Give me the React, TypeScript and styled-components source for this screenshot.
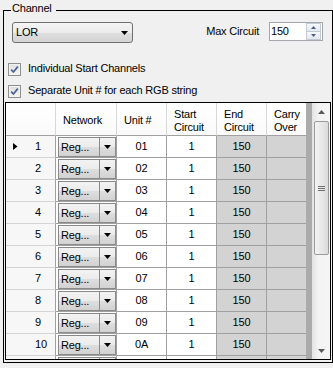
import React from 'react';
import styled, { createGlobalStyle } from 'styled-components';

const GlobalStyle = createGlobalStyle`
  * { box-sizing: border-box; }
  html, body { margin: 0; padding: 0; background: #f0f0f0; }
  body {
    width: 333px; height: 368px; overflow: hidden;
    font-family: "Liberation Sans", Arial, sans-serif;
    font-size: 11px; letter-spacing: -0.2px; color: #000;
  }
`;

const Frame = styled.fieldset`
  margin: 1px 0 0 3px;
  padding: 0 1px 2px;
  width: 330px;
  height: 362px;
  border: 1px solid #000;
  min-width: 0;
`;

const Legend = styled.legend`
  margin-left: 6px;
  padding: 0 4px 4px 1px;
  line-height: 14px;
`;

const TopRow = styled.div`
  margin-top: 3px;
  height: 21px;
  padding: 0 8px 0 7px;
  display: flex;
  align-items: flex-start;
`;

const Select = styled.div`
  width: 121px;
  height: 21px;
  border: 1px solid #707070;
  border-radius: 3px;
  background: linear-gradient(#f4f4f4 0%, #ececec 50%, #dfdfdf 50%, #d4d4d4 100%);
  display: flex;
  align-items: center;
  justify-content: space-between;
  padding: 0 4px 0 3px;
  line-height: 13px;
`;

const MaxLabel = styled.span`
  margin: 3px 10px 0 auto;
  line-height: 13px;
`;

const NumBox = styled.div`
  width: 54px;
  height: 19px;
  border: 1px solid #a5a7ad;
  background: #fff;
  display: flex;
  align-items: stretch;
`;

const NumValue = styled.span`
  flex: 1;
  padding: 2px 0 0 1px;
  line-height: 13px;
`;

const Spin = styled.div`
  width: 15px;
  margin: 0 1px 0 0;
  display: flex;
  flex-direction: column;
`;

const SpinBtn = styled.div`
  flex: 1;
  display: flex;
  align-items: center;
  justify-content: center;
  border: 1px solid #c5cbd4;
  background: linear-gradient(#f7f9fb, #e4e9ef);
  & + & { border-top: none; }
`;

const CheckRow = styled.div<{ $gap: number }>`
  margin-top: ${p => p.$gap}px;
  height: 13px;
  padding-left: 3px;
  display: flex;
  align-items: flex-start;
  gap: 7px;
  line-height: 13px;
`;

const CheckBox = styled.span`
  width: 13px;
  height: 13px;
  border: 1px solid #8e8f8f;
  background: linear-gradient(#dedede, #f6f6f6);
  box-shadow: inset 0 0 0 1px #f3f3f3;
  display: flex;
  align-items: center;
  justify-content: center;
  flex-shrink: 0;
`;

const CheckText = styled.span`
  margin-top: -1px;
`;

const Grid = styled.div`
  margin-top: 4px;
  height: 258px;
  border: 1px solid #000;
  background: #ababab;
  display: flex;
`;

const Table = styled.div`
  width: 306px;
  overflow: hidden;
  display: flex;
  flex-direction: column;
`;

const Row = styled.div<{ $h: number }>`
  display: grid;
  grid-template-columns: 50px 61px 50px 50px 50px 40px;
  width: 301px;
  height: ${p => p.$h}px;
  flex-shrink: 0;
`;

const HeadCell = styled.div`
  border-right: 1px solid #d8d8d8;
  border-bottom: 1px solid #a0a0a0;
  background: linear-gradient(#ffffff, #fafafa);
  padding: 3px 0 0 7px;
  display: flex;
  align-items: center;
  line-height: 13px;
`;

const RowHead = styled.div`
  border-right: 1px solid #a0a0a0;
  border-bottom: 1px solid #d4d4d4;
  background: #f7f7f7;
  padding-left: 7px;
  display: flex;
  align-items: center;
  line-height: 13px;
`;

const Marker = styled.span`
  width: 22px;
  display: flex;
  align-items: center;
`;

const Cell = styled.div<{ $shade?: boolean }>`
  border-right: 1px solid #a0a0a0;
  border-bottom: 1px solid #a0a0a0;
  background: ${p => (p.$shade ? '#d3d3d3' : '#ffffff')};
  display: flex;
  align-items: center;
  justify-content: center;
  line-height: 13px;
`;

const ComboCell = styled.div`
  border-right: 1px solid #a0a0a0;
  border-bottom: 1px solid #a0a0a0;
  background: #fff;
  padding: 1px 0 0 2px;
`;

const Combo = styled.div`
  height: 20px;
  display: flex;
`;

const ComboBody = styled.div`
  flex: 1;
  border: 1px solid #8a8a8a;
  background: linear-gradient(#f3f3f3 0%, #ebebeb 50%, #dedede 50%, #d2d2d2 100%);
  padding-left: 2px;
  display: flex;
  align-items: center;
  line-height: 13px;
`;

const ComboBtn = styled.div`
  width: 16px;
  border: 1px solid #8a8a8a;
  border-left: none;
  background: linear-gradient(#f3f3f3 0%, #ebebeb 50%, #dedede 50%, #d2d2d2 100%);
  display: flex;
  align-items: center;
  justify-content: center;
`;

const Strip = styled.div`
  width: 6px;
`;

const ScrollBar = styled.div`
  width: 18px;
  display: flex;
  flex-direction: column;
  background: linear-gradient(to right, #e3e3e3, #f3f3f3 35%, #f5f5f5);
`;

const ScrollBtn = styled.div`
  height: 17px;
  display: flex;
  align-items: center;
  justify-content: center;
  flex-shrink: 0;
`;

const Track = styled.div`
  flex: 1;
  padding: 1px 1px 0 2px;
`;

const Thumb = styled.div`
  height: 134px;
  border: 1px solid #9a9a9a;
  border-radius: 2px;
  background: linear-gradient(to right, #f3f3f3, #e6e6e6 60%, #dadada);
  display: flex;
  align-items: center;
  justify-content: center;
`;

const DownArrow = ({ color = '#000' }: { color?: string }) => (
  <svg width="7" height="4" viewBox="0 0 7 4"><polygon points="0,0 7,0 3.5,4" fill={color} /></svg>
);
const UpArrow = ({ color = '#000' }: { color?: string }) => (
  <svg width="7" height="4" viewBox="0 0 7 4"><polygon points="0,4 7,4 3.5,0" fill={color} /></svg>
);
const SmallUp = () => (
  <svg width="5" height="3" viewBox="0 0 5 3"><polygon points="0,3 5,3 2.5,0" fill="#4d5f86" /></svg>
);
const SmallDown = () => (
  <svg width="5" height="3" viewBox="0 0 5 3"><polygon points="0,0 5,0 2.5,3" fill="#4d5f86" /></svg>
);
const RowArrow = () => (
  <svg width="5" height="7" viewBox="0 0 5 7"><polygon points="0,0 4.5,3.5 0,7" fill="#000" /></svg>
);
const Check = () => (
  <svg width="9" height="9" viewBox="0 0 9 9">
    <path d="M1.2 4.6 L3.4 7 L7.8 1.6" fill="none" stroke="#4f6191" strokeWidth="1.7" />
  </svg>
);
const Grip = () => (
  <svg width="7" height="5" viewBox="0 0 7 5">
    <rect x="0" y="0" width="7" height="1" fill="#707070" />
    <rect x="0" y="2" width="7" height="1" fill="#707070" />
    <rect x="0" y="4" width="7" height="1" fill="#707070" />
  </svg>
);

const units = ['01', '02', '03', '04', '05', '06', '07', '08', '09', '0A'];

export default function App() {
  return (
    <>
      <GlobalStyle />
      <Frame>
        <Legend>Channel</Legend>
        <TopRow>
          <Select>
            <span>LOR</span>
            <DownArrow />
          </Select>
          <MaxLabel>Max Circuit</MaxLabel>
          <NumBox>
            <NumValue>150</NumValue>
            <Spin>
              <SpinBtn><SmallUp /></SpinBtn>
              <SpinBtn><SmallDown /></SpinBtn>
            </Spin>
          </NumBox>
        </TopRow>
        <CheckRow $gap={20}>
          <CheckBox><Check /></CheckBox>
          <CheckText>Individual Start Channels</CheckText>
        </CheckRow>
        <CheckRow $gap={9}>
          <CheckBox><Check /></CheckBox>
          <CheckText>Separate Unit # for each RGB string</CheckText>
        </CheckRow>
        <Grid>
          <Table>
            <Row $h={33}>
              <HeadCell />
              <HeadCell>Network</HeadCell>
              <HeadCell>Unit #</HeadCell>
              <HeadCell>Start<br />Circuit</HeadCell>
              <HeadCell>End<br />Circuit</HeadCell>
              <HeadCell>Carry<br />Over</HeadCell>
            </Row>
            {units.map((u, i) => (
              <Row $h={22} key={u}>
                <RowHead>
                  <Marker>{i === 0 && <RowArrow />}</Marker>
                  {i + 1}
                </RowHead>
                <ComboCell>
                  <Combo>
                    <ComboBody>Reg...</ComboBody>
                    <ComboBtn><DownArrow /></ComboBtn>
                  </Combo>
                </ComboCell>
                <Cell>{u}</Cell>
                <Cell>1</Cell>
                <Cell $shade>150</Cell>
                <Cell $shade />
              </Row>
            ))}
            <Row $h={22}>
              <RowHead />
              <ComboCell>
                <Combo>
                  <ComboBody />
                  <ComboBtn />
                </Combo>
              </ComboCell>
              <Cell />
              <Cell />
              <Cell $shade />
              <Cell $shade />
            </Row>
          </Table>
          <Strip />
          <ScrollBar>
            <ScrollBtn><UpArrow color="#5a5a5a" /></ScrollBtn>
            <Track>
              <Thumb><Grip /></Thumb>
            </Track>
            <ScrollBtn><DownArrow color="#5a5a5a" /></ScrollBtn>
          </ScrollBar>
        </Grid>
      </Frame>
    </>
  );
}
